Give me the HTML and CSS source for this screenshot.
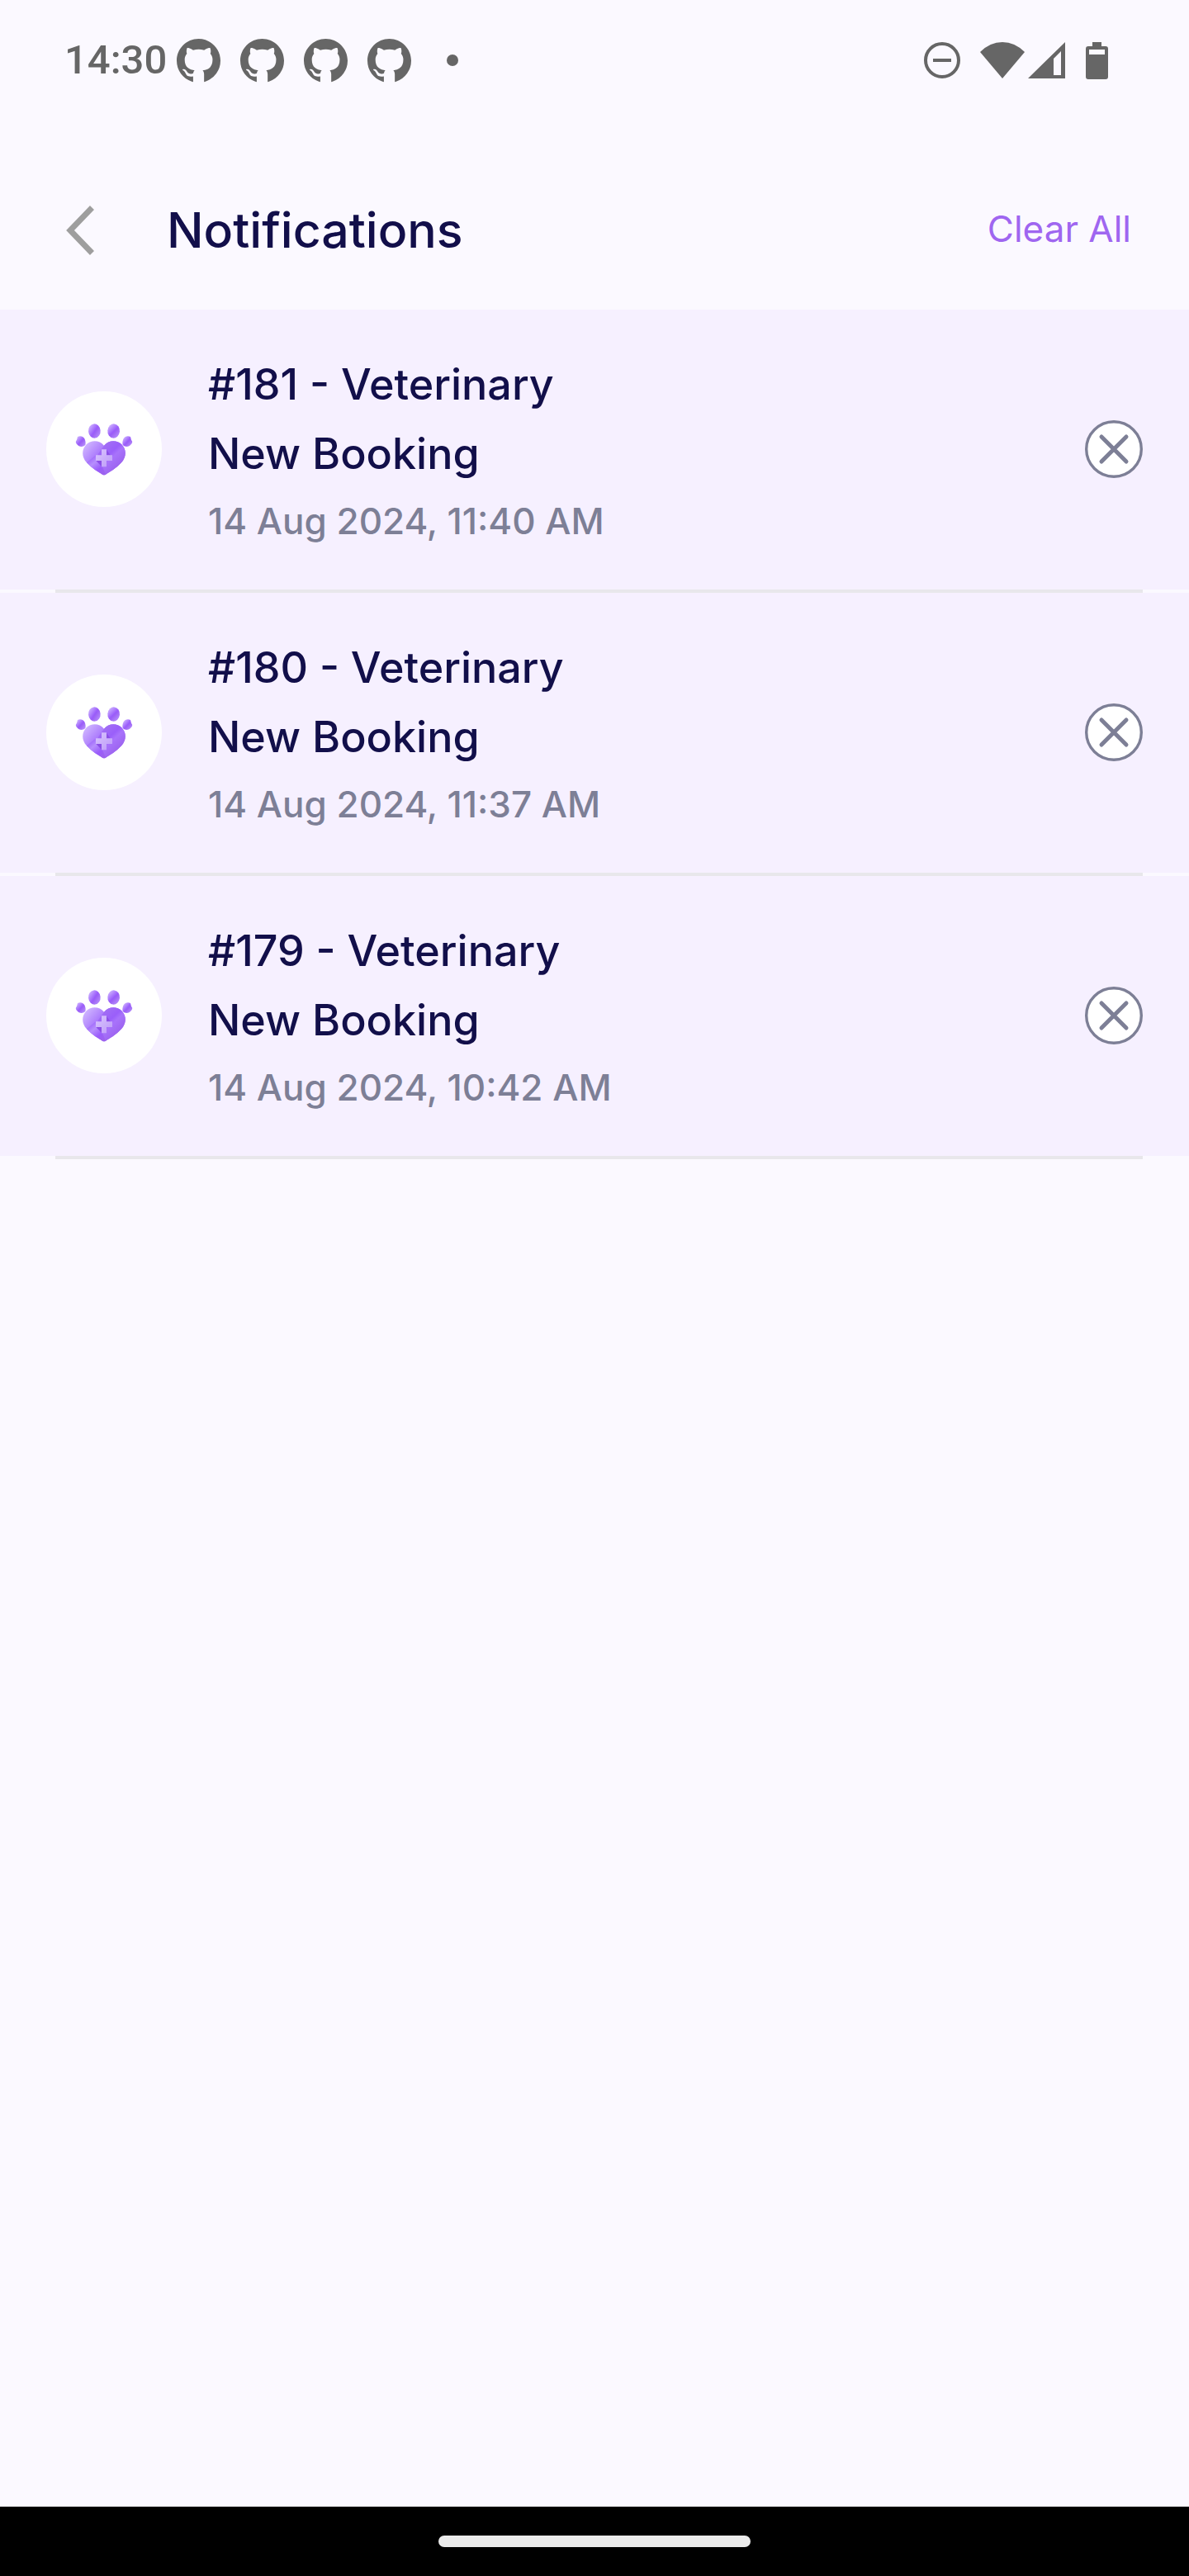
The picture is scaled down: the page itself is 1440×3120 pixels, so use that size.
FILE: index.html
```html
<!DOCTYPE html>
<html lang="en">
<head>
<meta charset="utf-8">
<meta name="viewport" content="width=device-width, initial-scale=1">
<title>Notifications</title>
<link rel="stylesheet" href="styles.css">
</head>
<body>
<svg class="defs" aria-hidden="true">
  <defs>
    <linearGradient id="pad" x1="0.1" y1="0.1" x2="0.9" y2="0.9">
      <stop offset="0" stop-color="#cfb5ff"/>
      <stop offset="0.52" stop-color="#9a5cfb"/>
      <stop offset="0.6" stop-color="#9d63f5"/>
      <stop offset="1" stop-color="#b68dfc"/>
    </linearGradient>
    <linearGradient id="heart" gradientUnits="userSpaceOnUse" x1="195" y1="235" x2="310" y2="335">
      <stop offset="0" stop-color="#cdb2ff"/>
      <stop offset="0.5" stop-color="#9f66fb"/>
      <stop offset="1" stop-color="#9c62ee"/>
    </linearGradient>
    <linearGradient id="lobe" gradientUnits="userSpaceOnUse" x1="250" y1="230" x2="325" y2="310">
      <stop offset="0" stop-color="#a473f2"/>
      <stop offset="0.45" stop-color="#9a5ffa"/>
      <stop offset="0.6" stop-color="#a873fb"/>
      <stop offset="1" stop-color="#9b62ee"/>
    </linearGradient>
    <linearGradient id="fold" gradientUnits="userSpaceOnUse" x1="205" y1="290" x2="250" y2="345">
      <stop offset="0" stop-color="#a16afb"/>
      <stop offset="0.3" stop-color="#b78ffd"/>
      <stop offset="0.7" stop-color="#9a5cfb"/>
      <stop offset="1" stop-color="#9c62ee"/>
    </linearGradient>
    <linearGradient id="cross" x1="0" y1="0" x2="1" y2="1">
      <stop offset="0" stop-color="#d9c5fe"/>
      <stop offset="1" stop-color="#bd9af8"/>
    </linearGradient>
    <symbol id="github" viewBox="0 0 16 16">
      <path fill="currentColor" d="M8 0C3.58 0 0 3.58 0 8c0 3.54 2.29 6.53 5.47 7.59L6.01 15.75V13.72c-2.01.37-2.53-.49-2.69-.94-.09-.23-.48-.94-.82-1.13-.28-.15-.68-.52-.01-.53.63-.01 1.08.58 1.23.82.72 1.21 1.87.87 2.33.66.07-.52.28-.87.51-1.07-1.78-.2-3.64-.89-3.64-3.95 0-.87.31-1.59.82-2.15-.08-.2-.36-1.02.08-2.12 0 0 .67-.21 2.2.82.64-.18 1.32-.27 2-.27.68 0 1.36.09 2 .27 1.53-1.04 2.2-.82 2.2-.82.44 1.1.16 1.92.08 2.12.51.56.82 1.27.82 2.15 0 3.07-1.87 3.75-3.65 3.95.29.25.54.73.54 1.48V15.75L10.53 15.59A8.013 8.013 0 0 0 16 8c0-4.42-3.58-8-8-8z"/>
    </symbol>
    <symbol id="paw" viewBox="48 44 420 420">
      <ellipse cx="223" cy="188" rx="22" ry="26" fill="url(#pad)" transform="rotate(-6 223 188)"/>
      <ellipse cx="293" cy="188" rx="22" ry="26" fill="url(#pad)" transform="rotate(6 293 188)"/>
      <path d="M162 209C171 204 182 207 187 216C191 224 192 232 190 239C183 246 170 247 163 240C157 235 154 230 156 225C160 221 160 215 162 209Z" fill="url(#pad)"/>
      <path d="M354 209C345 204 334 207 329 216C325 224 324 232 326 239C333 246 346 247 353 240C359 235 362 230 360 225C356 221 356 215 354 209Z" fill="url(#pad)"/>
      <path d="M258 241C241 220 211 220 194 237C176 255 176 283 195 303C215 325 239 338 252 346Q258 349 264 346C277 338 301 325 321 303C340 283 340 255 322 237C305 220 275 220 258 241Z" fill="url(#heart)"/>
      <path d="M258 241C275 220 305 220 322 237C340 255 340 283 321 303C301 325 277 338 264 346L236 272Z" fill="url(#lobe)"/>
      <path d="M195 303L229 275L249 318L264 346Q258 349 252 346C239 338 215 325 195 303Z" fill="url(#fold)"/>
      <path d="M267 256L281 276H267ZM229 296L249 317V296Z" fill="#8b4fe6"/>
      <path d="M249 255H267V276H288V296H267V318H249V296H228V276H249Z" fill="url(#cross)"/>
    </symbol>
    <symbol id="close" viewBox="0 0 70 70">
      <circle cx="35" cy="35" r="33.3" fill="#fff" stroke="#7d7f96" stroke-width="3.4"/>
      <path d="M20 20L50 50M50 20L20 50" fill="none" stroke="#7d7f96" stroke-width="5" stroke-linecap="round"/>
    </symbol>
  </defs>
</svg>

<div class="status">
  <time class="clock">14:30</time>
  <div class="apps">
    <svg class="app"><use href="#github"/></svg>
    <svg class="app"><use href="#github"/></svg>
    <svg class="app"><use href="#github"/></svg>
    <svg class="app"><use href="#github"/></svg>
    <span class="more"></span>
  </div>
  <div class="system">
    <svg class="dnd" viewBox="0 0 44 44"><circle cx="22" cy="22" r="20" fill="none" stroke="currentColor" stroke-width="4"/><path d="M11 20H33V24H11Z" fill="currentColor"/></svg>
    <svg class="wifi" viewBox="0 0 54 44"><path d="M0 12Q12 0 27 0T54 12L27 44Z" fill="currentColor"/></svg>
    <svg class="signal" viewBox="0 0 45 44"><path fill="currentColor" fill-rule="evenodd" d="M45 0V44H0ZM40 11L31 20V40H40Z"/></svg>
    <svg class="battery" viewBox="0 0 27 45"><path fill="currentColor" fill-rule="evenodd" d="M8 0H19V5H24Q27 5 27 8V42Q27 45 24 45H3Q0 45 0 42V8Q0 5 3 5H8ZM4 9V15H23V9Z"/></svg>
  </div>
</div>

<header class="header">
  <button class="back" type="button" aria-label="Back">
    <svg class="chevron" viewBox="0 0 34 60"><path d="M31.500 2.500L5 30L31.500 57.500" fill="none" stroke="#9e9e9e" stroke-width="7"/></svg>
  </button>
  <h1 class="title">Notifications</h1>
  <button class="clear" type="button">Clear All</button>
</header>

<main class="main">
  <ul class="list">
    <li class="item">
      <div class="row">
        <span class="avatar"><svg class="paw"><use href="#paw"/></svg></span>
        <div class="text">
          <h2 class="subject">#181 - Veterinary</h2>
          <p class="message">New Booking</p>
          <time class="date">14 Aug 2024, 11:40 AM</time>
        </div>
        <button class="dismiss" type="button" aria-label="Dismiss #181"><svg class="cross"><use href="#close"/></svg></button>
      </div>
    </li>
    <li class="item">
      <div class="row">
        <span class="avatar"><svg class="paw"><use href="#paw"/></svg></span>
        <div class="text">
          <h2 class="subject">#180 - Veterinary</h2>
          <p class="message">New Booking</p>
          <time class="date">14 Aug 2024, 11:37 AM</time>
        </div>
        <button class="dismiss" type="button" aria-label="Dismiss #180"><svg class="cross"><use href="#close"/></svg></button>
      </div>
    </li>
    <li class="item">
      <div class="row">
        <span class="avatar"><svg class="paw"><use href="#paw"/></svg></span>
        <div class="text">
          <h2 class="subject">#179 - Veterinary</h2>
          <p class="message">New Booking</p>
          <time class="date">14 Aug 2024, 10:42 AM</time>
        </div>
        <button class="dismiss" type="button" aria-label="Dismiss #179"><svg class="cross"><use href="#close"/></svg></button>
      </div>
    </li>
  </ul>
</main>

<footer class="navbar"><span class="handle"></span></footer>
</body>
</html>
```

FILE: styles.css
```css
* {
  box-sizing: border-box;
}

body {
  display: flex;
  flex-direction: column;
  min-height: 100vh;
  margin: 0;
  background: #fbf9ff;
  color: #120f4a;
  font-family: Inter, "Liberation Sans", sans-serif;
}

svg {
  display: block;
}

h1,
h2,
p,
ul {
  margin: 0;
  padding: 0;
  font-weight: 500;
}

button {
  padding: 0;
  border: 0;
  background: none;
  font: inherit;
  cursor: pointer;
}

.defs {
  position: absolute;
  width: 0;
  height: 0;
}

/* Status bar */
.status {
  display: flex;
  align-items: center;
  height: 146px;
  padding: 0 98px 0 78px;
  color: #666;
}

.clock {
  font: 500 49px/60px Roboto, "Liberation Sans", sans-serif;
}

.apps {
  display: flex;
  align-items: center;
  gap: 24px;
  margin-left: 12px;
}

.app {
  width: 53px;
  height: 53px;
}

.more {
  width: 14px;
  height: 14px;
  margin-left: 19px;
  border-radius: 50%;
  background: currentColor;
}

.system {
  display: flex;
  align-items: center;
  margin-left: auto;
}

.dnd {
  width: 44px;
  height: 44px;
  margin-right: 24px;
}

.wifi {
  width: 54px;
  height: 44px;
  margin-right: 4px;
}

.signal {
  width: 45px;
  height: 44px;
  margin-right: 25px;
}

.battery {
  width: 27px;
  height: 45px;
}

/* Screen header */
.header {
  display: flex;
  align-items: center;
  height: 229px;
  padding: 36px 70px 0 80px;
}

.chevron {
  width: 34px;
  height: 60px;
}

.title {
  margin-left: 88px;
  font-size: 59px;
  line-height: 72px;
}

.clear {
  margin: 0 0 4px auto;
  color: #9f66f0;
  font-size: 44px;
  line-height: 60px;
}

/* Notification list */
.main {
  flex: 1;
}

.list {
  list-style: none;
}

.item::after {
  content: "";
  display: block;
  height: 4px;
  margin: 0 56px 0 67px;
  background: #e8e7eb;
}

.row {
  display: flex;
  align-items: center;
  padding: 43px 56px 44px;
  background: #f6f0ff;
}

.avatar {
  flex: none;
  border-radius: 50%;
  background: #fff;
}

.paw {
  width: 140px;
  height: 140px;
}

.text {
  flex: 1;
  margin-left: 56px;
  padding-top: 6px;
}

.subject,
.message {
  font-size: 52px;
  line-height: 84px;
}

.date {
  display: block;
  color: #7d7f96;
  font-size: 44px;
  line-height: 78px;
}

.cross {
  width: 70px;
  height: 70px;
}

/* System navigation */
.navbar {
  display: flex;
  align-items: center;
  justify-content: center;
  height: 84px;
  background: #000;
}

.handle {
  width: 378px;
  height: 14px;
  border-radius: 7px;
  background: #ebebeb;
}
```
